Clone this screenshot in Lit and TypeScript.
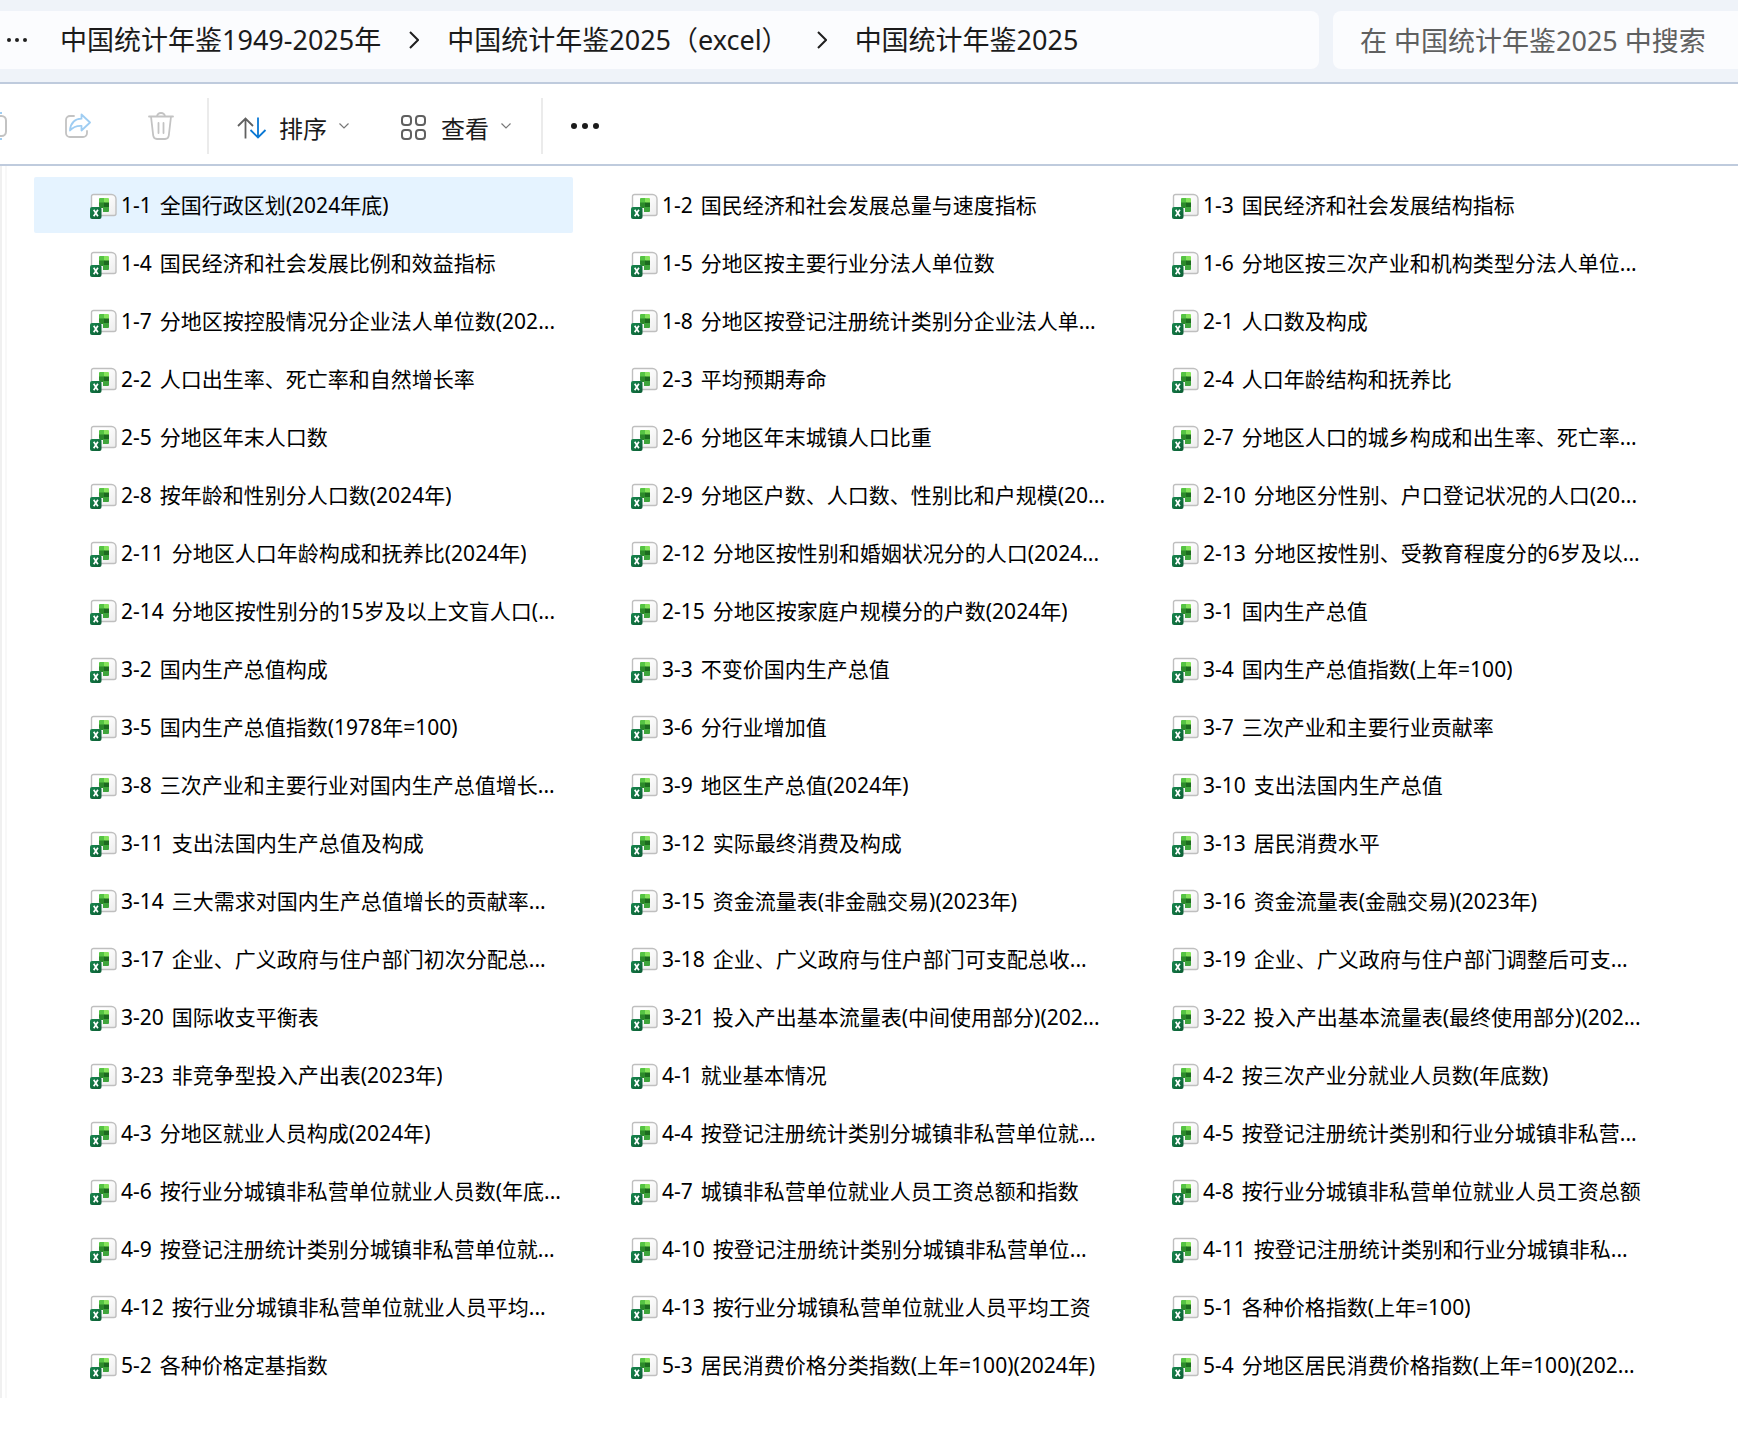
import { LitElement, html, css, svg } from "lit";
import { customElement, property } from "lit/decorators.js";

const FILES = `1-1 全国行政区划(2024年底)
1-2 国民经济和社会发展总量与速度指标
1-3 国民经济和社会发展结构指标
1-4 国民经济和社会发展比例和效益指标
1-5 分地区按主要行业分法人单位数
1-6 分地区按三次产业和机构类型分法人单位...
1-7 分地区按控股情况分企业法人单位数(202...
1-8 分地区按登记注册统计类别分企业法人单...
2-1 人口数及构成
2-2 人口出生率、死亡率和自然增长率
2-3 平均预期寿命
2-4 人口年龄结构和抚养比
2-5 分地区年末人口数
2-6 分地区年末城镇人口比重
2-7 分地区人口的城乡构成和出生率、死亡率...
2-8 按年龄和性别分人口数(2024年)
2-9 分地区户数、人口数、性别比和户规模(20...
2-10 分地区分性别、户口登记状况的人口(20...
2-11 分地区人口年龄构成和抚养比(2024年)
2-12 分地区按性别和婚姻状况分的人口(2024...
2-13 分地区按性别、受教育程度分的6岁及以...
2-14 分地区按性别分的15岁及以上文盲人口(...
2-15 分地区按家庭户规模分的户数(2024年)
3-1 国内生产总值
3-2 国内生产总值构成
3-3 不变价国内生产总值
3-4 国内生产总值指数(上年=100)
3-5 国内生产总值指数(1978年=100)
3-6 分行业增加值
3-7 三次产业和主要行业贡献率
3-8 三次产业和主要行业对国内生产总值增长...
3-9 地区生产总值(2024年)
3-10 支出法国内生产总值
3-11 支出法国内生产总值及构成
3-12 实际最终消费及构成
3-13 居民消费水平
3-14 三大需求对国内生产总值增长的贡献率...
3-15 资金流量表(非金融交易)(2023年)
3-16 资金流量表(金融交易)(2023年)
3-17 企业、广义政府与住户部门初次分配总...
3-18 企业、广义政府与住户部门可支配总收...
3-19 企业、广义政府与住户部门调整后可支...
3-20 国际收支平衡表
3-21 投入产出基本流量表(中间使用部分)(202...
3-22 投入产出基本流量表(最终使用部分)(202...
3-23 非竞争型投入产出表(2023年)
4-1 就业基本情况
4-2 按三次产业分就业人员数(年底数)
4-3 分地区就业人员构成(2024年)
4-4 按登记注册统计类别分城镇非私营单位就...
4-5 按登记注册统计类别和行业分城镇非私营...
4-6 按行业分城镇非私营单位就业人员数(年底...
4-7 城镇非私营单位就业人员工资总额和指数
4-8 按行业分城镇非私营单位就业人员工资总额
4-9 按登记注册统计类别分城镇非私营单位就...
4-10 按登记注册统计类别分城镇非私营单位...
4-11 按登记注册统计类别和行业分城镇非私...
4-12 按行业分城镇非私营单位就业人员平均...
4-13 按行业分城镇私营单位就业人员平均工资
5-1 各种价格指数(上年=100)
5-2 各种价格定基指数
5-3 居民消费价格分类指数(上年=100)(2024年)
5-4 分地区居民消费价格指数(上年=100)(202...`.split("\n");

const chevron = html`<svg class="chevron" width="10" height="18" viewBox="0 0 10 18" aria-hidden="true">
  <path d="M1 1l8 8-8 8" fill="none" stroke="#1f1f1f" stroke-width="2" />
</svg>`;

const caret = html`<svg class="caret" width="10" height="6" viewBox="0 0 10 6" aria-hidden="true">
  <path d="M.5.5L5 5 9.500.5" fill="none" stroke="#777" stroke-width="1.200" />
</svg>`;

const dots = (r: number, gap: number) => svg`
  <circle cx=${r} cy=${r} r=${r} /><circle cx=${r + gap} cy=${r} r=${r} /><circle cx=${r + gap * 2} cy=${r} r=${r} />`;

@customElement("file-item")
export class FileItem extends LitElement {
  @property() name = "";
  @property({ type: Boolean, reflect: true }) selected = false;

  static styles = css`
    :host { display: block; min-width: 0; }
    .item {
      box-sizing: border-box;
      display: flex;
      align-items: center;
      gap: 4px;
      width: 100%;
      height: 56px;
      padding: 0 0 0 56px;
      border: 0;
      border-radius: 2px;
      background: transparent;
      color: #000;
      font: 21px/28px "Noto Sans", "Noto Sans CJK SC", sans-serif;
      text-align: left;
      white-space: nowrap;
    }
    :host([selected]) .item { background: #e5f3ff; }
    .icon { flex: none; margin-top: 2px; }
    .name { display: flex; gap: 8px; min-width: 0; }
    .title { overflow: hidden; }
  `;

  render() {
    const [code, title] = this.name.split(" ");
    return html`<button class="item" aria-pressed=${this.selected ? "true" : "false"}>
      <svg class="icon" width="27" height="26" viewBox="0 0 27 26" aria-hidden="true">
        <defs>
          <linearGradient id="page" x1="0" y1="0" x2="1" y2="1">
            <stop offset="0.300" stop-color="#fff" /><stop offset="1" stop-color="#ececec" />
          </linearGradient>
          <linearGradient id="badge" x1="0" y1="0" x2="1" y2="1">
            <stop offset="0" stop-color="#18884f" /><stop offset="1" stop-color="#0b5c33" />
          </linearGradient>
        </defs>
        <path d="M3.500 1.500h18a4.500 4.500 0 0 1 4.500 4.500v14.500a2 2 0 0 1-2 2H3.500a2 2 0 0 1-2-2v-17a2 2 0 0 1 2-2z" fill="url(#page)" stroke="#bfbfbf" stroke-width="1.400" />
        <path d="M9 6a1 1 0 0 1 1-1h4.500v5H9z" fill="#55c344" />
        <path d="M14 5h4a1 1 0 0 1 1 1v4h-5z" fill="#86e35c" />
        <path d="M9 9.500h5.500V15H11a2 2 0 0 1-2-2z" fill="#2c8a2b" />
        <path d="M14 9.500h5v5h-5z" fill="#1c6a1f" />
        <path d="M13 14h6v4a1 1 0 0 1-1 1h-5z" fill="#3fa53c" />
        <rect x="0" y="14" width="11.500" height="12" rx="2" fill="url(#badge)" />
        <path d="M3.700 16.800l4.200 6.400M7.900 16.800l-4.200 6.400" stroke="#fff" stroke-width="1.700" />
      </svg>
      <span class="name"><span>${code}</span><span class="title">${title}</span></span>
    </button>`;
  }
}

@customElement("app-root")
export class AppRoot extends LitElement {
  static styles = css`
    :host {
      display: block;
      min-height: 100vh;
      background: #fff;
      color: #1b1b1b;
      font-family: "Noto Sans", "Noto Sans CJK SC", sans-serif;
    }
    button, input { font-family: inherit; color: inherit; }
    .address-bar {
      display: flex;
      gap: 14px;
      padding: 11px 0 13px;
      background: #eff3f9;
      border-bottom: 2px solid #bfcbdd;
    }
    .crumbs {
      flex: 1 1 0;
      min-width: 0;
      box-sizing: border-box;
      height: 58px;
      display: flex;
      align-items: center;
      gap: 28px;
      padding-left: 7px;
      background: #fbfcfe;
      border-radius: 0 8px 8px 0;
      overflow: hidden;
      white-space: nowrap;
    }
    .crumbs a { color: inherit; text-decoration: none; font-size: 27px; line-height: 36px; }
    .plain {
      display: flex;
      align-items: center;
      padding: 0;
      border: 0;
      background: none;
      white-space: nowrap;
    }
    .crumbs .plain { padding-right: 5px; }
    .chevron { flex: none; }
    .search {
      box-sizing: border-box;
      flex: none;
      width: 405px;
      height: 58px;
      padding: 0 0 0 27px;
      border: 0;
      border-radius: 8px 0 0 8px;
      background: #fbfcfe;
      color: #5f6060;
      font-size: 27px;
    }
    .search::placeholder { color: #5f6060; opacity: 1; }
    .toolbar {
      box-sizing: border-box;
      display: flex;
      align-items: center;
      height: 82px;
      padding-top: 4px;
      border-bottom: 2px solid #bfcbdd;
      overflow: hidden;
    }
    .tools { display: flex; align-items: center; gap: 57px; padding-right: 33px; }
    .menus { display: flex; align-items: center; gap: 52px; padding: 0 30px 0 28px; }
    .divider { width: 2px; height: 56px; background: #ebebeb; }
    .menu { font-size: 24px; line-height: 32px; gap: 12px; }
    .menu .glyph { margin-top: 4px; }
    .menu .label { padding-top: 6px; }
    .more { padding-left: 28px; }
    .body { display: flex; }
    .rail {
      flex: none;
      width: 3px;
      border-left: 2px solid #f0f0f0;
      border-right: 2px solid #f8f8f8;
    }
    .grid {
      flex: 1;
      display: grid;
      grid-template-columns: repeat(3, minmax(0, 1fr));
      gap: 2px;
      padding: 11px 83px 5px 27px;
    }
  `;

  render() {
    return html`
      <header class="address-bar">
        <nav class="crumbs" aria-label="路径">
          <button class="plain" aria-label="更多路径">
            <svg width="20" height="4" viewBox="0 0 20 4" fill="#1f1f1f">${dots(2, 8)}</svg>
          </button>
          <a href="#">中国统计年鉴1949-2025年</a>${chevron}
          <a href="#">中国统计年鉴2025（excel）</a>${chevron}
          <a href="#">中国统计年鉴2025</a>
        </nav>
        <input class="search" type="search" aria-label="搜索" placeholder="在 中国统计年鉴2025 中搜索" />
      </header>
      <div class="toolbar" role="toolbar" aria-label="命令">
        <div class="tools">
          <button class="plain" aria-label="重命名">
            <svg width="8" height="28" viewBox="0 0 8 28" fill="none" stroke-width="2">
              <path d="M0 4h1.500a4.500 4.500 0 0 1 4.500 4.500v11a4.500 4.500 0 0 1-4.500 4.500H0" stroke="#c3c3c3" />
              <path d="M0 1h2M0 27h2" stroke="#9fcdf2" />
            </svg>
          </button>
          <button class="plain" aria-label="共享">
            <svg width="26" height="26" viewBox="0 0 26 26" fill="none" stroke-width="1.800" stroke-linejoin="round" stroke-linecap="round">
              <path d="M9 3H5a4 4 0 0 0-4 4v13a4 4 0 0 0 4 4h13a4 4 0 0 0 4-4v-2" stroke="#c3c3c3" />
              <path d="M16.500 1.500l8.500 8-8.500 8v-4.500c-5-.300-8 .700-11.500 4.500 .500-7 4-11.500 11.500-11.800z" stroke="#9fcdf2" />
            </svg>
          </button>
          <button class="plain" aria-label="删除">
            <svg width="26" height="28" viewBox="0 0 26 28" fill="none" stroke="#c3c3c3" stroke-width="1.800" stroke-linecap="round">
              <path d="M1 4.500h24M9 4.500a4 3.500 0 0 1 8 0M3 4.500l2.200 19a4 4 0 0 0 3.800 3.500h8a4 4 0 0 0 3.800-3.500l2.200-19M10.500 11v10M15.500 11v10" />
            </svg>
          </button>
        </div>
        <div class="divider"></div>
        <div class="menus">
          <button class="plain menu">
            <svg class="glyph" width="30" height="22" viewBox="0 0 30 22" fill="none" stroke-width="1.800">
              <path d="M8.500 21.500V1.500M1 9l7.500-7.500L16 9" stroke="#606060" />
              <path d="M21 .5v20M13.500 13l7.500 7.500 7.500-7.500" stroke="#0a78d4" />
            </svg>
            <span class="label">排序</span>${caret}
          </button>
          <button class="plain menu">
            <svg class="glyph" width="28" height="26" viewBox="0 0 28 26" fill="none" stroke="#606060" stroke-width="2">
              <rect x="1" y="1" width="9" height="9" rx="3" /><rect x="15" y="1" width="9" height="9" rx="3" />
              <rect x="1" y="15" width="9" height="9" rx="3" /><rect x="15" y="15" width="9" height="9" rx="3" />
            </svg>
            <span class="label">查看</span>${caret}
          </button>
        </div>
        <div class="divider"></div>
        <button class="plain more" aria-label="查看更多">
          <svg width="28" height="6" viewBox="0 0 28 6" fill="#1b1b1b">${dots(3, 11)}</svg>
        </button>
      </div>
      <main class="body">
        <div class="rail"></div>
        <div class="grid">
          ${FILES.map((name, i) => html`<file-item .name=${name} ?selected=${i === 0}></file-item>`)}
        </div>
      </main>
    `;
  }
}
